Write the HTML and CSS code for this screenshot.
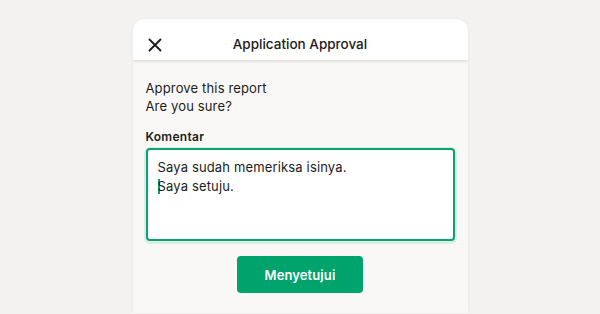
FILE: index.html
```html
<!DOCTYPE html>
<html>
<head>
<meta charset="utf-8">
<link rel="stylesheet" href="styles.css">
</head>
<body>
<div class="page">
  <div class="card">
    <div class="header">
      <svg class="close" width="14" height="14" viewBox="0 0 14 14"><path d="M1.5 1.5 L12.5 12.5 M12.5 1.5 L1.5 12.5" stroke="#1a1a1a" stroke-width="1.8" stroke-linecap="round"/></svg>
      <div class="title">Application Approval</div>
    </div>
    <div class="body">
      <p class="msg">Approve this report<br>Are you sure?</p>
      <div class="label">Komentar</div>
      <div class="textarea"><span>Saya sudah memeriksa isinya.</span><br><span class="caret"></span>Saya setuju.</div>
      <div class="actions"><button class="btn">Menyetujui</button></div>
    </div>
  </div>
</div>
</body>
</html>
```
FILE: styles.css
```css
* { box-sizing: border-box; }
html, body { margin: 0; padding: 0; }
body {
  width: 600px; height: 314px; overflow: hidden;
  background: #f3f2f0;
  font-family: Inter, "Noto Sans", sans-serif;
  color: #1c1c1c;
}
.page { display: flex; justify-content: center; padding-top: 19px; }
.card {
  width: 335px; height: 294px;
  background: #f9f8f6;
  border-radius: 12px 12px 0 0;
  box-shadow: 0 0 3px rgba(0,0,0,0.06);
  overflow: hidden;
}
.header {
  position: relative;
  height: 42px;
  background: #fff;
  display: flex; align-items: center; justify-content: center;
  box-shadow: 0 1px 2px rgba(0,0,0,0.10);
  border-bottom: 1px solid #e4e3e1;
}
.close { position: absolute; left: 15px; top: 19px; }
.title { font-size: 13.5px; font-weight: 500; padding-top: 8px; letter-spacing: 0; }
.body { padding: 18px 13px 0 13px; }
.msg { margin: 0; font-size: 13px; line-height: 18px; letter-spacing: 0.15px; }
.label { margin-top: 14px; font-size: 12px; font-weight: 600; line-height: 16px; letter-spacing: 0.3px; }
.textarea {
  margin-top: 3px;
  height: 93px;
  background: #fff;
  border: 2px solid #0aa470;
  border-radius: 4px;
  padding: 8px 10px;
  font-size: 13px; line-height: 19px; letter-spacing: 0.15px;
  box-shadow: 0 1px 0 2px rgba(10,164,112,0.12);
}
.caret { display: inline-block; width: 2px; height: 15px; background: #0aa470; vertical-align: -3px; margin-right: -2px; }
.actions { display: flex; justify-content: center; margin-top: 15px; }
.btn {
  width: 126px; height: 37px;
  border: none; border-radius: 4px;
  background: #00a36b; color: #fff;
  font-family: inherit; font-size: 13px; font-weight: 600; letter-spacing: 0.1px;
}
```
